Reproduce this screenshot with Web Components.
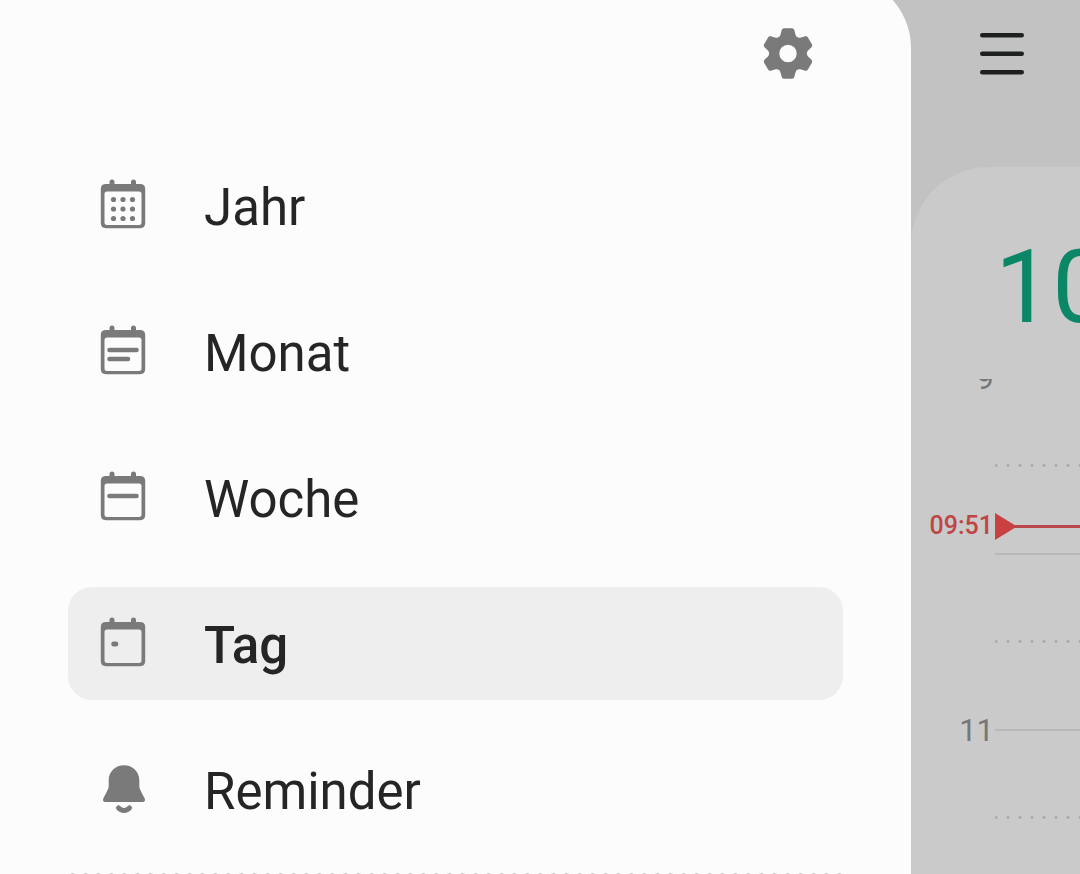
<!DOCTYPE html>
<html lang="de">
<head>
<meta charset="utf-8">
<meta name="viewport" content="width=device-width, initial-scale=1">
<title>Kalender</title>
<style>
  body {
    margin: 0;
    font-family: Roboto, "Noto Sans", sans-serif;
    color: #252525;
    background: #c2c2c2;
  }
</style>
</head>
<body>
<calendar-app>
  <nav-drawer slot="drawer">
    <drawer-item icon="year" href="#jahr">Jahr</drawer-item>
    <drawer-item icon="month" href="#monat">Monat</drawer-item>
    <drawer-item icon="week" href="#woche">Woche</drawer-item>
    <drawer-item icon="day" href="#tag" selected>Tag</drawer-item>
    <drawer-item icon="bell" href="#reminder">Reminder</drawer-item>
  </nav-drawer>
  <day-view date="10">
    <hour-row>9</hour-row>
    <hour-row></hour-row>
    <hour-row>11</hour-row>
    <now-marker slot="now">09:51</now-marker>
  </day-view>
</calendar-app>

<script>
const define = (name, html, setup) => {
  const template = document.createElement('template');
  template.innerHTML = html;
  customElements.define(name, class extends HTMLElement {
    constructor() {
      super();
      this.attachShadow({ mode: 'open' }).append(template.content.cloneNode(true));
    }
    connectedCallback() {
      if (setup) setup(this, this.shadowRoot);
    }
  });
};

/* Drawer on the left, a strip of the dimmed day view on the right */
define('calendar-app', `
  <style>
    :host {
      display: grid;
      grid-template-columns: minmax(0, 1fr) 169px;
      height: 100vh;
      overflow: hidden;
    }
  </style>
  <slot name="drawer"></slot>
  <slot></slot>
`);

/* The rounded corner begins above the top edge of the window */
define('nav-drawer', `
  <style>
    :host {
      display: block;
      margin-top: -24px;
      padding: 24px 68px 0;
      border-top-right-radius: 72px;
      background: #fcfcfc;
    }
    header {
      display: flex;
      justify-content: flex-end;
      height: 121px;
      padding: 28px 31px 0 0;
      box-sizing: border-box;
      margin-bottom: 28px;
    }
    button {
      display: block;
      width: 48px;
      height: 51px;
      padding: 0;
      border: 0;
      background: none;
      color: #7a7a7a;
    }
    button svg { display: block; overflow: visible; }
    nav { display: grid; gap: 33px; }
    .divider {
      height: 5px;
      margin-top: 27px;
      background: radial-gradient(circle at center, #999 1px, transparent 3px) -2px 0 / 13px 5px repeat-x;
    }
  </style>
  <header>
    <button type="button" aria-label="Einstellungen">
      <svg width="48" height="51" viewBox="-24 -25.5 48 51" fill="currentColor" aria-hidden="true">
        <defs>
          <path id="t" d="M-10.5-15.2Q-8.3-16.3-7.6-18.500L-6.300-23.500Q-5.800-25.300-4-25.300H4Q5.800-25.300 6.300-23.500L7.600-18.500Q8.300-16.300 10.500-15.200L8-12H-8Z"/>
        </defs>
        <circle r="13.600" fill="none" stroke="currentColor" stroke-width="9.800"/>
        <use href="#t"/>
        <use href="#t" transform="rotate(60)"/>
        <use href="#t" transform="rotate(120)"/>
        <use href="#t" transform="rotate(180)"/>
        <use href="#t" transform="rotate(240)"/>
        <use href="#t" transform="rotate(300)"/>
      </svg>
    </button>
  </header>
  <nav aria-label="Ansichten"><slot></slot></nav>
  <div class="divider"></div>
`);

const calendarFrame = `
  <path fill-rule="evenodd" d="M6 5H40Q45.200 5 45.200 10V44Q45.200 49.200 40 49.200H6Q.800 49.200 .800 44V10Q.800 5 6 5ZM7 12.500Q4.500 12.500 4.500 15V43.500Q4.500 46 7 46H39Q41.500 46 41.500 43.500V15Q41.500 12.500 39 12.500Z"/>
  <path d="M12 3V7M33.500 3V7" fill="none" stroke="currentColor" stroke-width="5" stroke-linecap="round"/>`;

const icons = {
  year: calendarFrame + [20.500, 30, 39.500].map(y =>
    [13.500, 23, 32.500].map(x => `<circle cx="${x}" cy="${y}" r="2.600"/>`).join('')).join(''),
  month: calendarFrame + '<path d="M9.500 25H36.500M9.500 34H28" fill="none" stroke="currentColor" stroke-width="4.600" stroke-linecap="round"/>',
  week: calendarFrame + '<path d="M9.500 25H36.500" fill="none" stroke="currentColor" stroke-width="4.600" stroke-linecap="round"/>',
  day: calendarFrame + '<rect x="11.300" y="24.500" width="7" height="5" rx="2.500"/>',
  bell: `
    <path d="M24 2.200C32.500 2.200 39.300 8.500 39.300 17V23C39.300 26 42 30 44.700 35.500C45.600 37.500 44.500 39 42.800 39H5.200C3.500 39 2.400 37.500 3.300 35.500C6 30 8.700 26 8.700 23V17C8.700 8.500 15.500 2.200 24 2.200Z"/>
    <path d="M18.500 44.800C21.500 48.300 26.500 48.300 29.500 44.800" fill="none" stroke="currentColor" stroke-width="5" stroke-linecap="round"/>`
};

define('drawer-item', `
  <style>
    :host { display: block; }
    a {
      display: flex;
      align-items: center;
      gap: 58px;
      height: 113px;
      padding: 0 32px;
      box-sizing: border-box;
      border-radius: 24px;
      color: inherit;
      font-size: 51px;
      line-height: 60px;
      text-decoration: none;
    }
    svg {
      flex: none;
      width: 46px;
      height: 50px;
      padding-bottom: 4px;
      color: #7a7a7a;
      fill: currentColor;
      overflow: visible;
    }
    span { padding-top: 4px; }
    :host([selected]) a { background: #eee; font-weight: 500; }
  </style>
  <a><svg viewBox="0 0 46 50" aria-hidden="true"></svg><span><slot></slot></span></a>
`, (host, root) => {
  const link = root.querySelector('a');
  link.href = host.getAttribute('href');
  if (host.hasAttribute('selected')) link.setAttribute('aria-current', 'page');
  root.querySelector('svg').innerHTML = icons[host.getAttribute('icon')];
});

define('day-view', `
  <style>
    :host {
      display: flex;
      flex-direction: column;
      min-height: 0;
      overflow: hidden;
    }
    header { flex: none; height: 167px; padding: 32px 0 0 68px; box-sizing: border-box; }
    button {
      display: block;
      padding: 0;
      border: 0;
      background: none;
      color: #1e2020;
    }
    button svg { display: block; }
    section {
      flex: 1;
      min-height: 0;
      display: flex;
      flex-direction: column;
      border-top-left-radius: 78px;
      background: #cacaca;
      overflow: hidden;
    }
    h1 {
      flex: none;
      height: 212px;
      margin: 0;
      padding: 60px 0 0 84px;
      box-sizing: border-box;
      color: #0b8767;
      font-size: 102px;
      font-weight: 400;
      line-height: 120px;
    }
    .scroll { flex: 1; min-height: 0; overflow: hidden; }
    .hours { position: relative; margin-top: -2px; }
  </style>
  <header>
    <button type="button" aria-label="Menü">
      <svg width="46" height="44" viewBox="0 0 46 44" fill="none" stroke="currentColor" stroke-width="4.400" stroke-linecap="round" aria-hidden="true">
        <path d="M3.200 3.300H42.800M3.200 21.800H42.800M3.200 40.200H42.800"/>
      </svg>
    </button>
  </header>
  <section>
    <h1></h1>
    <div class="scroll">
      <div class="hours"><slot></slot><slot name="now"></slot></div>
    </div>
  </section>
`, (host, root) => {
  root.querySelector('h1').textContent = host.getAttribute('date');
});

/* One hour: a solid line at the full hour, a dotted one at the half */
define('hour-row', `
  <style>
    :host {
      display: grid;
      grid-template-columns: 83px 1fr;
      column-gap: 1px;
      height: 176px;
    }
    .label {
      margin-top: -16px;
      color: #777;
      font-size: 31px;
      line-height: 36px;
      text-align: right;
    }
    .lines { border-top: 2px solid #b8b8b8; }
    .half {
      height: 3px;
      margin-top: 85px;
      background: radial-gradient(circle at center, #aaa 1px, transparent 2px) -5px 0 / 12px 3px repeat-x;
    }
  </style>
  <div class="label"><slot></slot></div>
  <div class="lines"><div class="half"></div></div>
`);

/* Current time, laid over the hour grid */
define('now-marker', `
  <style>
    :host {
      position: absolute;
      top: 135px;
      left: 0;
      right: 0;
      display: grid;
      grid-template-columns: 82px 22px 1fr;
      align-items: center;
      column-gap: 2px;
      height: 27px;
      color: #c04646;
      font-size: 25px;
      font-weight: 500;
      line-height: 28px;
    }
    .time { text-align: right; }
    svg { display: block; }
    .line { height: 3px; margin-left: -4px; background: #bb474b; }
  </style>
  <span class="time"><slot></slot></span>
  <svg width="22" height="27" viewBox="0 0 22 27" aria-hidden="true"><path d="M0 0L22 13.500L0 27Z" fill="#c8403f"/></svg>
  <span class="line"></span>
`);
</script>
</body>
</html>
